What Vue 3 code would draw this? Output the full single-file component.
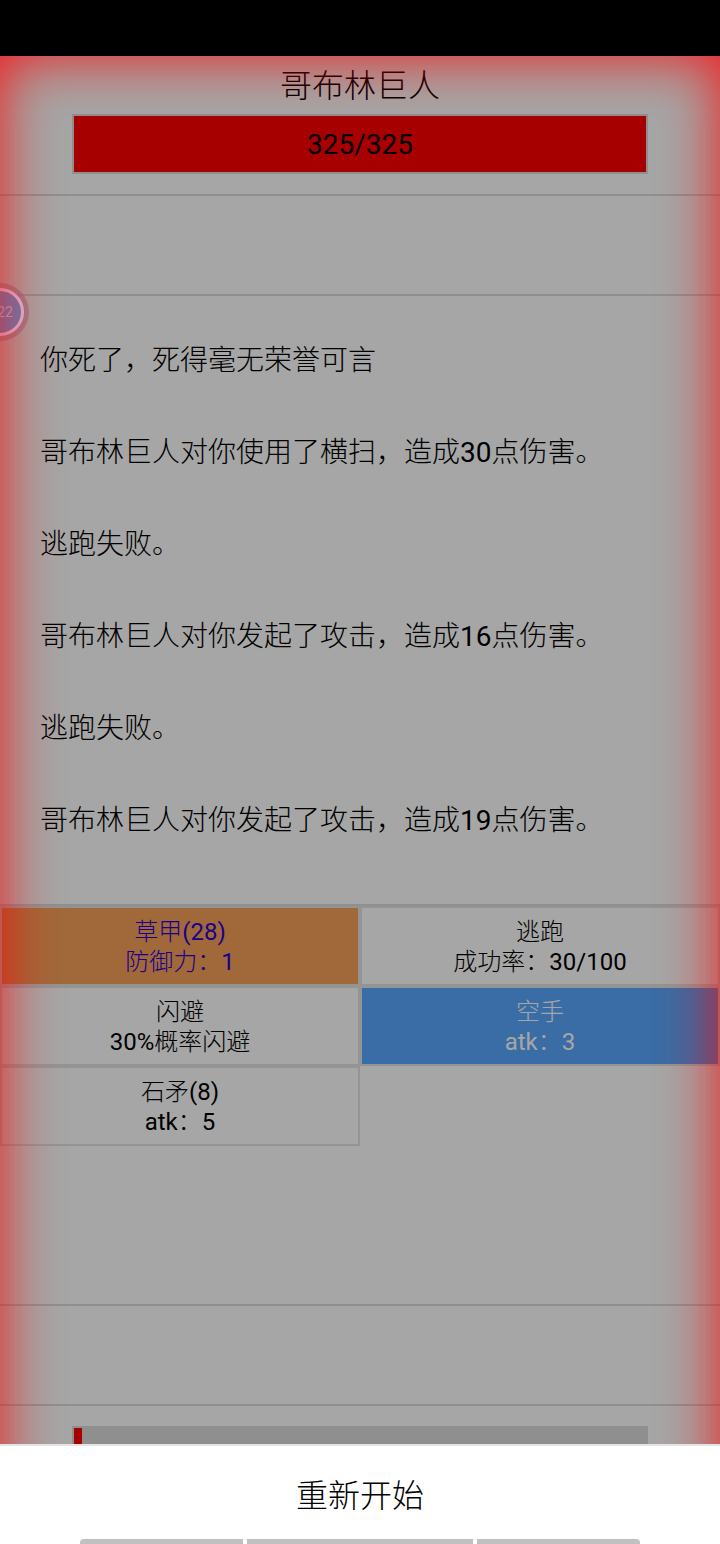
<script setup>
const logs = [
  '你死了，死得毫无荣誉可言',
  '哥布林巨人对你使用了横扫，造成30点伤害。',
  '逃跑失败。',
  '哥布林巨人对你发起了攻击，造成16点伤害。',
  '逃跑失败。',
  '哥布林巨人对你发起了攻击，造成19点伤害。',
]

const skills = [
  { name: '草甲(28)', desc: '防御力：1', type: 'armor' },
  { name: '逃跑', desc: '成功率：30/100' },
  { name: '闪避', desc: '30%概率闪避' },
  { name: '空手', desc: 'atk：3', type: 'weapon' },
  { name: '石矛(8)', desc: 'atk：5' },
]

// odd entries are the latin runs, they get the heavier weight
function runs(text) {
  return text.split(/([\x20-\x7e]+)/)
}
</script>

<template>
  <div class="phone">
    <div class="status"></div>
    <div class="game">
      <div class="enemy">
        <div class="enemy-name">哥布林巨人</div>
        <div class="hp">325/325</div>
      </div>
      <div class="buffs"></div>
      <div class="log">
        <p v-for="(line, i) in logs" :key="i">
          <span v-for="(r, j) in runs(line)" :key="j" :class="{ latin: j % 2 }">{{ r }}</span>
        </p>
      </div>
      <div class="skills">
        <div v-for="s in skills" :key="s.name" class="skill" :class="s.type">
          <div>
            <span v-for="(r, j) in runs(s.name)" :key="j" :class="{ latin: j % 2 }">{{ r }}</span>
          </div>
          <div>
            <span v-for="(r, j) in runs(s.desc)" :key="j" :class="{ latin: j % 2 }">{{ r }}</span>
          </div>
        </div>
      </div>
      <div class="player-buffs"></div>
      <div class="player">
        <div class="xp"><div class="xp-fill"></div></div>
      </div>
      <div class="dim"></div>
      <div class="timer">22</div>
      <div class="vignette"></div>
    </div>
    <div class="sheet">
      <div class="restart">重新开始</div>
      <div class="tabs">
        <span></span>
        <span></span>
        <span></span>
      </div>
    </div>
  </div>
</template>

<style>
html, body {
  margin: 0;
  background: #fff;
}
</style>

<style scoped>
.phone {
  position: relative;
  width: 720px;
  height: 1544px;
  overflow: hidden;
  display: flex;
  flex-direction: column;
  font-family: Roboto, "Noto Sans CJK SC", sans-serif;
  font-weight: 300;
  color: #000;
}

.latin {
  font-weight: 400;
}

.status {
  height: 56px;
  flex: none;
  background: #000;
}

.game {
  position: relative;
  flex: 1;
  background: #fff;
}

.enemy {
  height: 140px;
  box-sizing: border-box;
  display: flex;
  flex-direction: column;
  align-items: center;
  border-bottom: 2px solid #dcdcdc;
}

.enemy-name {
  height: 58px;
  font-size: 32px;
  line-height: 60px;
}

.hp {
  width: 576px;
  height: 60px;
  box-sizing: border-box;
  background: #ff0000;
  border: 2px solid #dcdcdc;
  font-size: 28px;
  line-height: 58px;
  font-weight: 400;
  text-align: center;
}

.buffs {
  height: 100px;
  box-sizing: border-box;
  border-bottom: 2px solid #dcdcdc;
}

.log {
  height: 608px;
  box-sizing: border-box;
  padding: 45px 40px 0;
  display: flex;
  flex-direction: column;
  gap: 52px;
  font-size: 28px;
  line-height: 40px;
}

.log p {
  margin: 0;
}

.skills {
  height: 402px;
  box-sizing: border-box;
  display: grid;
  grid-template-columns: 1fr 1fr;
  grid-auto-rows: 80px;
  border-top: 2px solid #dcdcdc;
  border-bottom: 2px solid #dcdcdc;
}

.skill {
  border: 2px solid #e4e4e4;
  box-sizing: border-box;
  padding-top: 2px;
  display: flex;
  flex-direction: column;
  justify-content: center;
  align-items: center;
  font-size: 24px;
  line-height: 30px;
}

.armor {
  background: #f7a259;
  color: #2a00d8;
}

.weapon {
  background: #59a6fe;
  color: #fff;
}

.player-buffs {
  height: 98px;
  border-bottom: 2px solid #dcdcdc;
}

.player {
  padding: 20px 72px 0;
}

.xp {
  height: 40px;
  box-sizing: border-box;
  background: #dcdcdc;
  border: 2px solid #dcdcdc;
}

.xp-fill {
  width: 8px;
  height: 100%;
  background: #ff0000;
}

.timer {
  position: absolute;
  left: -24px;
  top: 232px;
  width: 48px;
  height: 48px;
  box-sizing: border-box;
  border: 3px solid #d8c8ea;
  border-radius: 50%;
  background: #5a88c0;
  box-shadow: 0 0 0 5px rgba(140, 120, 140, 0.7);
  color: #a8bcd6;
  font-size: 14px;
  font-weight: 400;
  line-height: 42px;
  text-align: right;
  padding-right: 8px;
}

.dim {
  position: absolute;
  inset: 0;
  background: rgba(0, 0, 0, 0.35);
}

.vignette {
  position: absolute;
  inset: 0;
  box-shadow: inset 0 0 58px rgba(255, 0, 0, 0.88);
}

.sheet {
  position: absolute;
  left: 0;
  right: 0;
  bottom: 0;
  height: 100px;
  box-sizing: border-box;
  background: #fff;
  border-top: 2px solid #e4e4e4;
  display: flex;
  flex-direction: column;
}

.restart {
  flex: 1;
  display: flex;
  align-items: center;
  justify-content: center;
  font-size: 32px;
}

.tabs {
  height: 5px;
  padding: 0 80px;
  display: flex;
  gap: 4px;
}

.tabs span {
  background: #c0c0c0;
}

.tabs span:nth-child(1) {
  width: 163px;
  border-top-left-radius: 4px;
}

.tabs span:nth-child(2) {
  width: 226px;
}

.tabs span:nth-child(3) {
  width: 163px;
  border-top-right-radius: 4px;
}
</style>
